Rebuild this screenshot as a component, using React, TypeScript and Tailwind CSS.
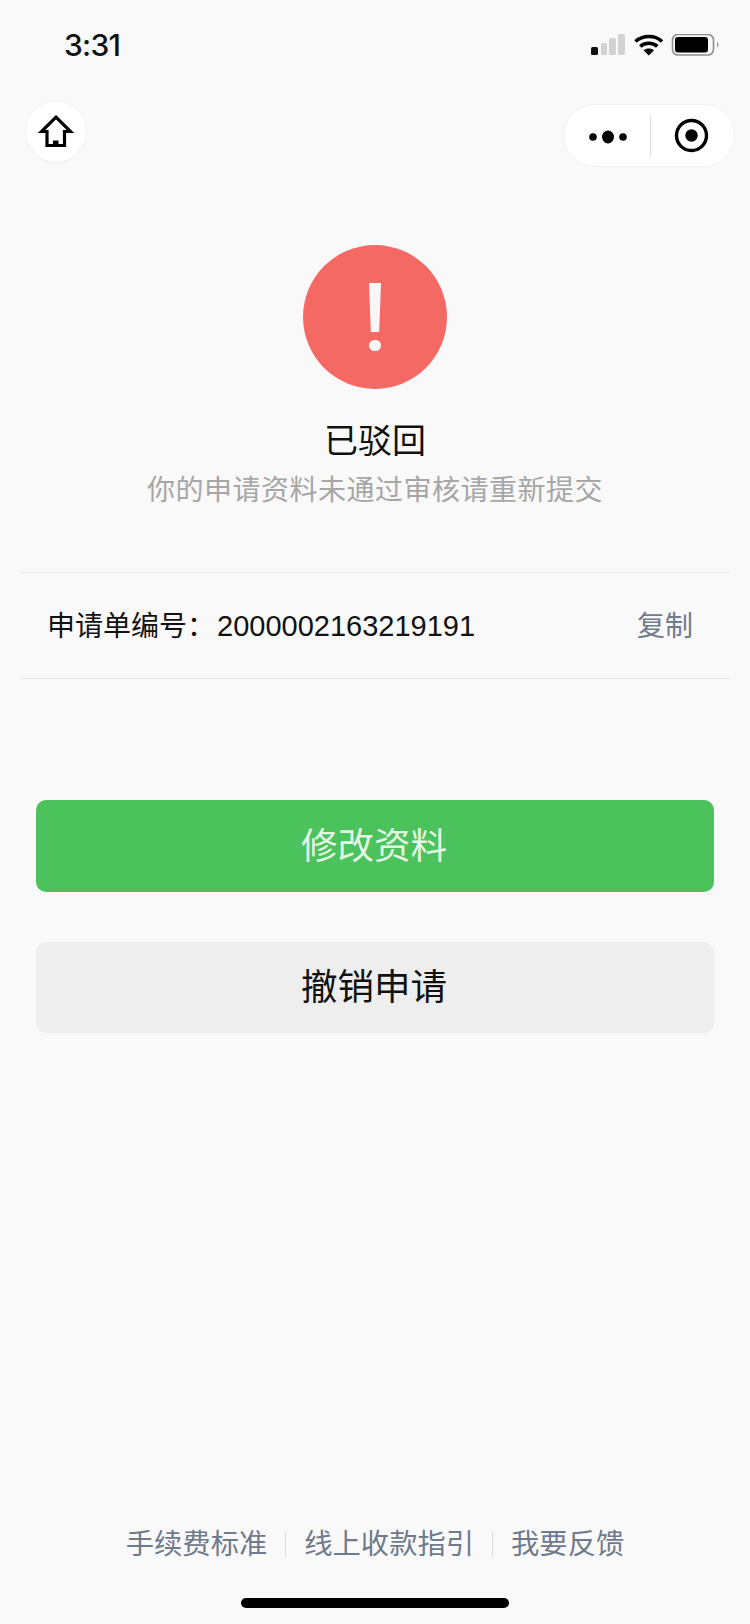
const cjk = "font-['Liberation_Sans','Noto_Sans_CJK_SC',sans-serif]";

function StatusBar() {
  return (
    <div className="flex h-[100px] items-start justify-between pl-[64px] pr-[30px] pt-[28px]">
      <span className="text-[30px] leading-[34px] font-medium text-[#111] font-['Inter',sans-serif] tracking-[-0.7px]">
        3:31
      </span>
      <svg width="129" height="22" viewBox="0 0 129 22" className="mt-[6px]">
        <rect x="0" y="13" width="7" height="8" rx="1.5" fill="#111" />
        <rect x="10" y="9" width="6" height="12" rx="1.5" fill="#d2d2d2" />
        <rect x="18" y="4" width="7" height="17" rx="1.5" fill="#d2d2d2" />
        <rect x="27" y="0" width="7" height="21" rx="1.5" fill="#d2d2d2" />
        <g fill="none" stroke="#000" strokeWidth="3.6">
          <path d="M44.5 7.5 C 51.5 0.8 64.5 0.8 71 7.5" />
          <path d="M49.3 12.4 C 53.5 8.2 62 8.2 66.3 12.4" />
        </g>
        <path d="M52.6 16.2 C 55.5 13.8 60 13.8 63 16.2 L 57.8 21.5 Z" fill="#000" />
        <rect x="81.5" y="0.5" width="41" height="20.5" rx="5.5" fill="none" stroke="#8f8f8f" strokeWidth="1.6" />
        <rect x="84" y="3" width="33" height="15.5" rx="3" fill="#000" />
        <path d="M126 8 C 128 8.8 128 12.4 126 13.4 Z" fill="#999" />
      </svg>
    </div>
  );
}

function NavBar() {
  return (
    <div className="flex h-[67px] items-start justify-between pl-[25px] pr-[15px]">
      <button className="flex h-[63px] w-[62px] items-center justify-center rounded-full border border-[#f1f1f1] bg-white">
        <svg width="36" height="33" viewBox="0 0 36 33">
          <path
            d="M18 2.2 L32.5 16.5 H26.5 V30.5 H9 V16.5 H3.5 Z"
            fill="none"
            stroke="#000"
            strokeWidth="3.2"
            strokeLinejoin="miter"
          />
          <rect x="15" y="25.5" width="5.5" height="5.5" fill="#000" />
        </svg>
      </button>
      <div className="mt-[4px] flex h-[63px] w-[172px] items-center rounded-full border border-[#f1f1f1] bg-white">
        <div className="flex w-[86px] justify-center pl-[2px] pt-[3px]">
          <svg width="38" height="14" viewBox="0 0 38 14">
            <circle cx="4" cy="7" r="3.8" fill="#000" />
            <ellipse cx="19" cy="7" rx="6" ry="6.4" fill="#000" />
            <circle cx="34" cy="7" r="3.8" fill="#000" />
          </svg>
        </div>
        <div className="h-[43px] w-px bg-[#dedede]" />
        <div className="flex flex-1 justify-center pr-[2px]">
          <svg width="35" height="35" viewBox="0 0 35 35">
            <circle cx="17.5" cy="17.5" r="15" fill="none" stroke="#000" strokeWidth="3.4" />
            <circle cx="17.5" cy="17.5" r="6.2" fill="#000" />
          </svg>
        </div>
      </div>
    </div>
  );
}

function FooterLinks() {
  return (
    <div className="flex h-[28px] items-center justify-center text-[28.3px] leading-[32px] text-[#6f7a8c]">
      <span>手续费标准</span>
      <span className="mx-[18px] h-[25px] w-px bg-[#d9d9d9]" />
      <span>线上收款指引</span>
      <span className="mx-[18px] h-[25px] w-px bg-[#d9d9d9]" />
      <span>我要反馈</span>
    </div>
  );
}

export default function App() {
  return (
    <div className={`flex h-[1624px] w-[750px] flex-col overflow-hidden bg-[#f9f9f9] ${cjk}`}>
      <StatusBar />
      <NavBar />

      <div className="mt-[78px] flex flex-col items-center">
        <div className="relative h-[144px] w-[144px] rounded-full bg-[#f56964]">
          <div className="absolute left-[66px] top-[38px] h-[49px] w-[12px] bg-[#f7f7f7] [clip-path:polygon(0_0,100%_0,85%_100%,15%_100%)]" />
          <div className="absolute left-[66px] top-[95px] h-[11px] w-[12px] rounded-full bg-[#f7f7f7]" />
        </div>
        <h1 className="mt-[33px] text-[34px] leading-[38px] font-normal text-[#111]">已驳回</h1>
        <p className="mt-[13px] text-[28px] leading-[36px] text-[#a6a6a6] tracking-[0.5px]">
          你的申请资料未通过审核请重新提交
        </p>
      </div>

      <div className="mx-[20px] mt-[63px] flex h-[107px] items-center justify-between border-y border-[#e9e9e9] pl-[27px] pr-[37px] pt-[2px] text-[28px]">
        <span className="text-[#111]">
          申请单编号：<span className="ml-[2px] text-[29px]">2000002163219191</span>
        </span>
        <span className="text-[#6f7a8c]">复制</span>
      </div>

      <div className="mx-[36px] mt-[121px] flex flex-col gap-[50px]">
        <button className="h-[92px] rounded-[10px] bg-[#4bc25c] pr-[2px] text-[36.5px] text-[#e4f7e6]">
          <span className="relative top-[1px]">修改资料</span>
        </button>
        <button className="h-[91px] rounded-[10px] bg-[#eeeeee] pr-[2px] text-[36.5px] text-[#111]">
          <span className="relative top-[1px]">撤销申请</span>
        </button>
      </div>

      <div className="mt-auto flex flex-col items-center pb-[16px]">
        <FooterLinks />
        <div className="mt-[40px] h-[10px] w-[268px] rounded-full bg-black" />
      </div>
    </div>
  );
}
